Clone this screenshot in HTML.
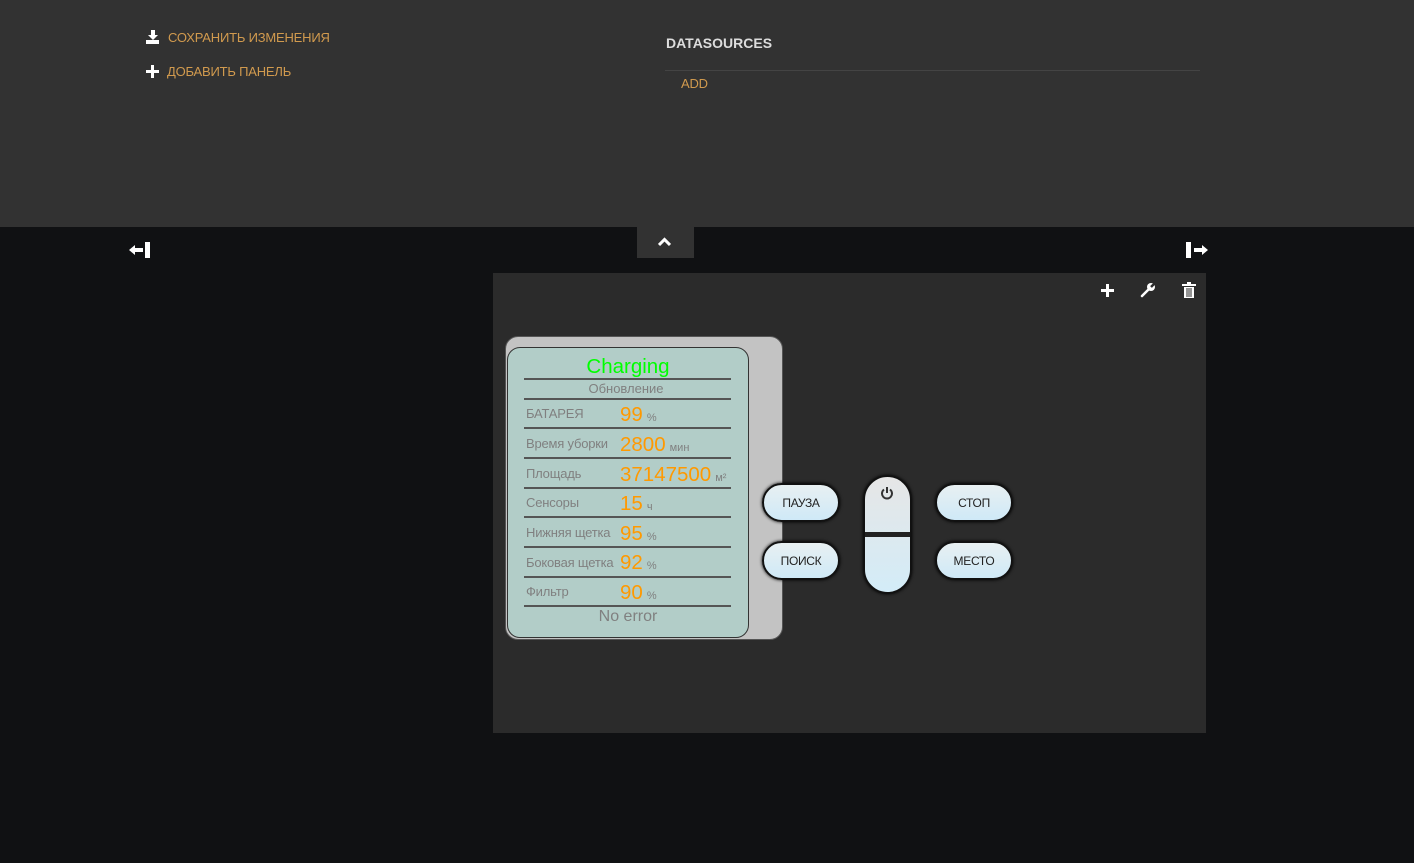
<!DOCTYPE html>
<html><head><meta charset="utf-8"><style>
*{margin:0;padding:0;box-sizing:border-box}
body{width:1414px;height:863px;background:#101113;font-family:"Liberation Sans",sans-serif;position:relative;overflow:hidden}
.hdr{position:absolute;left:0;top:0;width:1414px;height:227px;background:#323232}
.a{position:absolute;color:#d19a4e;font-size:13px;letter-spacing:-0.2px}
.ab{position:absolute}
.tab{position:absolute;left:637px;top:227px;width:57px;height:31px;background:#323232}
.panel{position:absolute;left:493px;top:273px;width:713px;height:460px;background:#2b2b2b}
.outer{position:absolute;left:505px;top:336px;width:278px;height:304px;background:#c3c3c3;border:1px solid #555;border-radius:13px}
.inner{position:absolute;left:507px;top:347px;width:242px;height:291px;background:#b2cdc8;border:1px solid #333;border-radius:13px}
.ln{position:absolute;left:524px;width:207px;height:2px;background:#555}
.lb{position:absolute;left:526px;color:#808080;font-size:13px;letter-spacing:-0.2px}
.v{position:absolute;left:620px;color:#ff9900;font-size:20.5px;line-height:20px}
.v small{color:#808080;font-size:11px;margin-left:4px}
.btn{position:absolute;width:78px;height:39px;border-radius:20px;border:2px solid #111;background:linear-gradient(#e8f0f2,#cfe9f7);box-shadow:0 0 3px #000;font-size:12px;color:#222;display:flex;align-items:center;justify-content:center;letter-spacing:-0.3px}
</style></head><body>
<div class="hdr"></div>
<svg class="ab" style="left:146px;top:30px" width="14" height="14" viewBox="0 0 14 14"><path d="M5 0h4v5h3l-5 5-5-5h3z" fill="#fff"/><rect x="0" y="10" width="13" height="4" fill="#fff"/></svg>
<div class="a" style="left:168px;top:30px">СОХРАНИТЬ ИЗМЕНЕНИЯ</div>
<svg class="ab" style="left:146px;top:65px" width="13" height="13" viewBox="0 0 13 13"><path d="M5 0h3v5h5v3H8v5H5V8H0V5h5z" fill="#fff"/></svg>
<div class="a" style="left:167px;top:64px">ДОБАВИТЬ ПАНЕЛЬ</div>
<div style="position:absolute;left:666px;top:35px;color:#ddd;font-size:14px;font-weight:bold">DATASOURCES</div>
<div style="position:absolute;left:665px;top:70px;width:535px;height:1px;background:#444"></div>
<div class="a" style="left:681px;top:76px">ADD</div>
<div class="tab"></div>
<svg class="ab" style="left:658px;top:237px" width="13" height="10" viewBox="0 0 13 10"><path d="M1 8l5.5-5.5L12 8" stroke="#fff" stroke-width="3" fill="none"/></svg>
<svg class="ab" style="left:129px;top:242px" width="22" height="16" viewBox="0 0 22 16"><rect x="16" y="0" width="5" height="16" fill="#fff"/><path d="M0 8l6-5v3h8v4H6v3z" fill="#fff"/></svg>
<svg class="ab" style="left:1186px;top:242px" width="22" height="16" viewBox="0 0 22 16"><rect x="0" y="0" width="5" height="16" fill="#fff"/><path d="M22 8l-6-5v3H8v4h8v3z" fill="#fff"/></svg>
<div class="panel"></div>
<svg class="ab" style="left:1101px;top:284px" width="13" height="13" viewBox="0 0 13 13"><path d="M5 0h3v5h5v3H8v5H5V8H0V5h5z" fill="#fff"/></svg>
<svg class="ab" style="left:1140px;top:282px" width="16" height="16" viewBox="0 0 16 16"><path d="M2 14l7-7" stroke="#fff" stroke-width="2.5" stroke-linecap="round"/><circle cx="11" cy="5" r="4" fill="#fff"/><path d="M11 5l4-4" stroke="#2b2b2b" stroke-width="2.5"/></svg>
<svg class="ab" style="left:1182px;top:282px" width="14" height="16" viewBox="0 0 14 16"><rect x="0" y="2" width="14" height="2" fill="#fff"/><rect x="5" y="0" width="4" height="2" fill="#fff"/><path d="M2 5h10v11H2z" fill="#fff"/><path d="M5 6v9M7 6v9M9 6v9" stroke="#2b2b2b" stroke-width="1"/></svg>
<div class="outer"></div>
<div class="inner"></div>
<div style="position:absolute;left:507px;top:355px;width:242px;text-align:center;color:#00ff00;font-size:20.5px">Charging</div>
<div class="ln" style="top:378px"></div>
<div style="position:absolute;left:507px;top:381px;width:238px;text-align:center;color:#808080;font-size:13px">Обновление</div>
<div class="ln" style="top:398px"></div>
<div class="lb" style="top:406px">БАТАРЕЯ</div><div class="v" style="top:405px">99<small>%</small></div>
<div class="ln" style="top:427px"></div>
<div class="lb" style="top:436px">Время уборки</div><div class="v" style="top:435px">2800<small>мин</small></div>
<div class="ln" style="top:457px"></div>
<div class="lb" style="top:466px">Площадь</div><div class="v" style="top:465px">37147500<small>м²</small></div>
<div class="ln" style="top:487px"></div>
<div class="lb" style="top:495px">Сенсоры</div><div class="v" style="top:494px">15<small>ч</small></div>
<div class="ln" style="top:516px"></div>
<div class="lb" style="top:525px">Нижняя щетка</div><div class="v" style="top:524px">95<small>%</small></div>
<div class="ln" style="top:546px"></div>
<div class="lb" style="top:555px">Боковая щетка</div><div class="v" style="top:553px">92<small>%</small></div>
<div class="ln" style="top:576px"></div>
<div class="lb" style="top:584px">Фильтр</div><div class="v" style="top:583px">90<small>%</small></div>
<div class="ln" style="top:605px"></div>
<div style="position:absolute;left:507px;top:608px;width:242px;text-align:center;color:#808080;font-size:16px">No error</div>
<div class="btn" style="left:762px;top:483px">ПАУЗА</div>
<div class="btn" style="left:762px;top:541px">ПОИСК</div>
<div class="btn" style="left:935px;top:483px">СТОП</div>
<div class="btn" style="left:935px;top:541px">МЕСТО</div>
<div style="position:absolute;left:863px;top:475px;width:49px;height:119px;border-radius:25px;border:2px solid #111;background:linear-gradient(#e6e6e6,#d3ecf8);box-shadow:0 0 3px #000;overflow:hidden">
<div style="position:absolute;left:0;top:55px;width:100%;height:5px;background:#222"></div></div>
<svg class="ab" style="left:880px;top:486px" width="14" height="14" viewBox="0 0 14 14"><path d="M4 3.5a5 5 0 1 0 6 0" stroke="#333" stroke-width="2" fill="none"/><path d="M7 1v6" stroke="#333" stroke-width="2"/></svg>
</body></html>
